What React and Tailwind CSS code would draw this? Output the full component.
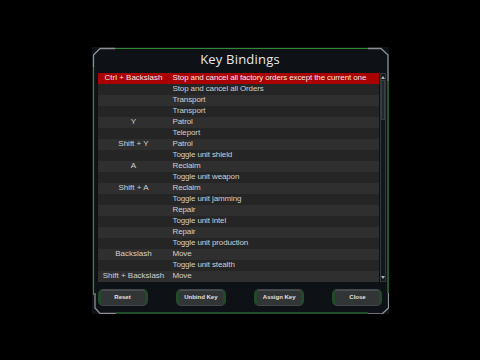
import React from 'react';

const rows = [
    ['Ctrl + Backslash', 'Stop and cancel all factory orders except the current one'],
    ['', 'Stop and cancel all Orders'],
    ['', 'Transport'],
    ['', 'Transport'],
    ['Y', 'Patrol'],
    ['', 'Teleport'],
    ['Shift + Y', 'Patrol'],
    ['', 'Toggle unit shield'],
    ['A', 'Reclaim'],
    ['', 'Toggle unit weapon'],
    ['Shift + A', 'Reclaim'],
    ['', 'Toggle unit jamming'],
    ['', 'Repair'],
    ['', 'Toggle unit intel'],
    ['', 'Repair'],
    ['', 'Toggle unit production'],
    ['Backslash', 'Move'],
    ['', 'Toggle unit stealth'],
    ['Shift + Backslash', 'Move'],
];

const buttons = ['Reset', 'Unbind Key', 'Assign Key', 'Close'];

function Frame() {
    // decorative border: green runs + grey corner brackets
    return (
        <svg className="absolute inset-0 pointer-events-none" width="297" height="267" viewBox="0 0 297 267" fill="none">
            <g stroke="#2f8a36" strokeWidth="1.2">
                <path d="M23 1.5H276" />
                <path d="M24 266H276" />
                <path d="M1.5 20V248" />
                <path d="M296 34V246" />
            </g>
            <g stroke="#8d8f92" strokeWidth="1.3">
                <path d="M1.5 20V8L8 1.5H23" />
                <path d="M276 1.5H289L296 8V34" />
                <path d="M3 246V261L8 266.5H24" />
                <path d="M276 267H290L296.5 261V246" />
            </g>
        </svg>
    );
}

export default function App() {
    return (
        <div className="w-[480px] h-[360px] bg-black flex items-center justify-center" style={{ fontFamily: '"Liberation Sans", Arial, sans-serif' }}>
            <div className="relative w-[297px] h-[267px] bg-[#0e1116] flex flex-col">
                <Frame />

                {/* Title */}
                <div className="h-[26px] flex items-center justify-center pt-[1px]">
                    <span className="text-[13px] font-medium text-[#e6e8ea] tracking-[0.2px]" style={{ fontFamily: '"Open Sans", sans-serif' }}>Key Bindings</span>
                </div>

                {/* Table + scrollbar */}
                <div className="flex pl-[6px] pr-[3px] gap-[1px]">
                    <div className="w-[281px] flex flex-col">
                        {rows.map((r, i) => (
                            <div key={i}
                                className={`h-[11px] flex items-center text-[8px] leading-none ${i === 0 ? 'bg-[#a90000] text-[#f2e6e6]' : i % 2 ? 'bg-[#252525] text-[#cfcfcf]' : 'bg-[#2f2f2f] text-[#cfcfcf]'}`}
                            >
                                <span className="w-[72px] text-center whitespace-nowrap">{r[0]}</span>
                                <span className="pl-[3px] whitespace-nowrap tracking-[-0.12px]">{r[1]}</span>
                            </div>
                        ))}
                    </div>
                    <div className="w-[6px] h-[209px] bg-[#14171b] border border-[#34373c] flex flex-col items-center">
                        <div className="w-0 h-0 mt-[2px] border-x-[2px] border-x-transparent border-b-[3px] border-b-[#b0b3b6]" />
                        <div className="w-[4px] h-[40px] mt-[1px] bg-[#23262b] border border-[#3b3e43]" />
                        <div className="flex-1" />
                        <div className="w-0 h-0 mb-[2px] border-x-[2px] border-x-transparent border-t-[3px] border-t-[#b0b3b6]" />
                    </div>
                </div>

                {/* Buttons */}
                <div className="flex justify-between pl-[6px] pr-[6px] mt-[7px]">
                    {buttons.map((b) => (
                        <div key={b}
                            className="w-[50px] h-[17px] flex items-center justify-center rounded-[5px] bg-[#323536] border-y border-y-[#44474a] border-x-[3px] border-x-[#224a28] shadow-[inset_0_1px_0_#4a4d50]"
                        >
                            <span className="text-[6px] font-bold text-[#e0e0e0] whitespace-nowrap">{b}</span>
                        </div>
                    ))}
                </div>
            </div>
        </div>
    );
}
